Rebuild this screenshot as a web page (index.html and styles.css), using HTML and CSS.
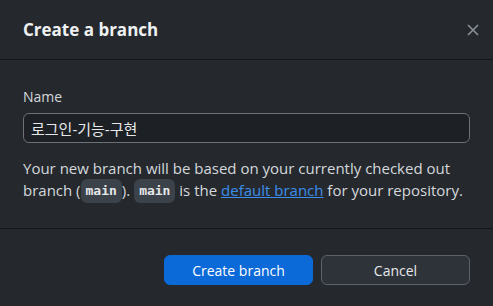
FILE: index.html
```html
<!doctype html>
<html lang="ko">
<head>
    <meta charset="UTF-8">
    <title>Create a branch</title>
    <link rel="stylesheet" href="styles.css">
</head>
<body>

<div class="dialog">
    <header class="dialog-header">
        <h1>Create a branch</h1>
        <button class="close" aria-label="Close">
            <svg width="12" height="12" viewBox="0 0 12 12">
                <path d="M1 1L11 11M11 1L1 11" stroke="currentColor" stroke-width="1.6" fill="none"/>
            </svg>
        </button>
    </header>

    <div class="dialog-body">
        <label class="field-label" for="branch-name">Name</label>
        <input class="field" id="branch-name" type="text" value="로그인-기능-구현">

        <p class="hint">
            Your new branch will be based on your currently checked out
            branch (<code>main</code>). <code>main</code> is the
            <a href="#">default branch</a> for your repository.
        </p>
    </div>

    <footer class="dialog-footer">
        <button class="btn primary">Create branch</button>
        <button class="btn">Cancel</button>
    </footer>
</div>

</body>
</html>
```

FILE: styles.css
```css
body {
    margin: 0;
    background-color: #25292e;
    color: #d4d8dc;
    font: 14px/22px "Open Sans", "Noto Sans CJK KR", sans-serif;
}

.dialog {
    height: 306px;
    display: flex;
    flex-direction: column;
}

.dialog-header {
    height: 60px;
    box-sizing: border-box;
    border-bottom: 1px solid #14171a;
    display: flex;
    align-items: center;
    justify-content: space-between;
    padding: 0 14px 0 23px;
}

h1 {
    margin: 0;
    font-size: 17px;
    font-weight: 700;
    color: #eef0f2;
}

.close {
    background: none;
    border: 0;
    padding: 0;
    color: #8a9098;
    width: 12px;
    height: 12px;
    display: flex;
}

.dialog-body {
    padding: 27px 23px 0;
    flex: 1;
    border-bottom: 1px solid #14171a;
}

.field-label {
    display: block;
    line-height: 20px;
    margin-bottom: 6px;
}

.field {
    display: block;
    width: 100%;
    box-sizing: border-box;
    height: 30px;
    padding: 0 7px;
    background-color: #1d2126;
    border: 1px solid #6b7178;
    border-radius: 6px;
    color: #e6e8ea;
    font: 15px "Open Sans", "Noto Sans CJK KR", sans-serif;
}

.hint {
    margin: 14px 0 0;
    font-size: 15px;
}

code {
    display: inline-block;
    vertical-align: middle;
    height: 24px;
    margin: -2px 0 -1px;
    padding: 0 5px;
    font: 600 13px/24px "DejaVu Sans Mono", monospace;
    background-color: #3c4249;
    color: #e6e8ea;
    border-radius: 6px;
}

a {
    color: #3b8eea;
}

.dialog-footer {
    height: 77px;
    display: flex;
    justify-content: flex-end;
    align-items: flex-start;
    gap: 8px;
    padding: 26px 23px 0;
    box-sizing: border-box;
}

.btn {
    width: 149px;
    height: 30px;
    border-radius: 6px;
    border: 1px solid #5d636b;
    background-color: #2e333a;
    color: #e6e8ea;
    font: 14px "Open Sans", sans-serif;
}

.btn.primary {
    background-color: #0b69d8;
    border-color: #0b69d8;
    color: #ffffff;
}
```
